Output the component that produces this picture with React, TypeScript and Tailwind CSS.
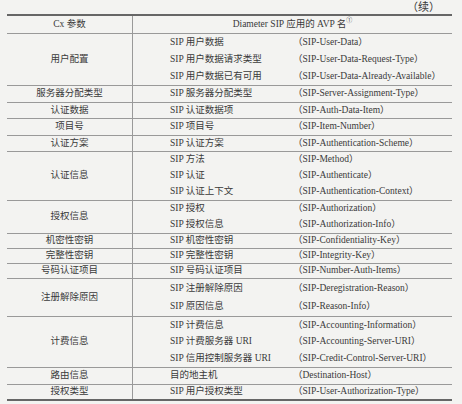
type Group = {
  name: string;
  h: number;
  rows: [string, string][];
};

const GROUPS: Group[] = [
  {
    name: "用户配置",
    h: 52,
    rows: [
      ["SIP 用户数据", "（SIP-User-Data）"],
      ["SIP 用户数据请求类型", "（SIP-User-Data-Request-Type）"],
      ["SIP 用户数据已有可用", "（SIP-User-Data-Already-Available）"],
    ],
  },
  { name: "服务器分配类型", h: 17, rows: [["SIP 服务器分配类型", "（SIP-Server-Assignment-Type）"]] },
  { name: "认证数据", h: 16, rows: [["SIP 认证数据项", "（SIP-Auth-Data-Item）"]] },
  { name: "项目号", h: 17, rows: [["SIP 项目号", "（SIP-Item-Number）"]] },
  { name: "认证方案", h: 16, rows: [["SIP 认证方案", "（SIP-Authentication-Scheme）"]] },
  {
    name: "认证信息",
    h: 49,
    rows: [
      ["SIP 方法", "（SIP-Method）"],
      ["SIP 认证", "（SIP-Authenticate）"],
      ["SIP 认证上下文", "（SIP-Authentication-Context）"],
    ],
  },
  {
    name: "授权信息",
    h: 33,
    rows: [
      ["SIP 授权", "（SIP-Authorization）"],
      ["SIP 授权信息", "（SIP-Authorization-Info）"],
    ],
  },
  { name: "机密性密钥", h: 15, rows: [["SIP 机密性密钥", "（SIP-Confidentiality-Key）"]] },
  { name: "完整性密钥", h: 15, rows: [["SIP 完整性密钥", "（SIP-Integrity-Key）"]] },
  { name: "号码认证项目", h: 15, rows: [["SIP 号码认证项目", "（SIP-Number-Auth-Items）"]] },
  {
    name: "注册解除原因",
    h: 38,
    rows: [
      ["SIP 注册解除原因", "（SIP-Deregistration-Reason）"],
      ["SIP 原因信息", "（SIP-Reason-Info）"],
    ],
  },
  {
    name: "计费信息",
    h: 51,
    rows: [
      ["SIP 计费信息", "（SIP-Accounting-Information）"],
      ["SIP 计费服务器 URI", "（SIP-Accounting-Server-URI）"],
      ["SIP 信用控制服务器 URI", "（SIP-Credit-Control-Server-URI）"],
    ],
  },
  { name: "路由信息", h: 17, rows: [["目的地主机", "（Destination-Host）"]] },
  { name: "授权类型", h: 16, rows: [["SIP 用户授权类型", "（SIP-User-Authorization-Type）"]] },
];

export default function App() {
  return (
    <div
      className="w-[462px] h-[404px] bg-[#f3f3f1] text-[#3a3a3a] text-[9.5px] leading-none overflow-hidden"
      style={{ fontFamily: '"Liberation Serif", "Noto Sans CJK SC", serif' }}
    >
      <div className="h-[14px] flex items-center justify-end pr-[22px] text-[11px]">（续）</div>

      <div className="ml-[7px] w-[445px] border-t-2 border-[#666]">
        <div className="flex h-[18px] border-b border-[#999]">
          <div className="w-[126px] flex items-center justify-center border-r border-[#999]">Cx 参数</div>
          <div className="flex-1 flex items-center justify-center">
            Diameter SIP 应用的 AVP 名<sup className="text-[6px] -mt-[4px]">①</sup>
          </div>
        </div>

        {GROUPS.map((g, i) => {
          const last = i === GROUPS.length - 1;
          return (
            <div
              key={g.name}
              className={`flex ${last ? "border-b-2 border-[#666]" : "border-b border-[#999]"}`}
              style={{ height: g.h }}
            >
              <div className="w-[126px] flex items-center justify-center border-r border-[#999]">{g.name}</div>
              <div className="flex-1 flex flex-col">
                {g.rows.map(([cn, avp]) => (
                  <div key={avp} className="flex-1 flex items-center">
                    <div className="w-[160px] pl-[37px] whitespace-nowrap">{cn}</div>
                    <div className="flex-1 whitespace-nowrap">{avp}</div>
                  </div>
                ))}
              </div>
            </div>
          );
        })}
      </div>
    </div>
  );
}
